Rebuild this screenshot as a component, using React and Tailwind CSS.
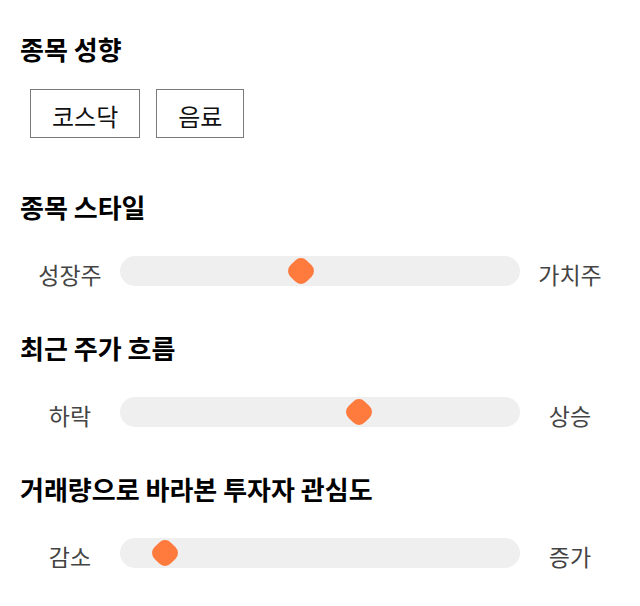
import { useState } from "react";

const sliders = [
  { id: "style", title: "종목 스타일", left: "성장주", right: "가치주", value: 45 },
  { id: "trend", title: "최근 주가 흐름", left: "하락", right: "상승", value: 60.5 },
  { id: "volume", title: "거래량으로 바라본 투자자 관심도", left: "감소", right: "증가", value: 8.3 },
];

function Slider({ value }) {
  return (
    <div className="relative h-[30px] flex-1 rounded-full bg-[#efefef]">
      <div
        className="absolute top-1/2 -translate-x-1/2 -translate-y-1/2"
        style={{ left: `calc(14px + (100% - 28px) * ${value / 100})` }}
      >
        <div className="h-[23px] w-[23px] rotate-45 rounded-[8px] bg-[#ff7a3d]" />
      </div>
    </div>
  );
}

export default function App() {
  const [tags] = useState(["코스닥", "음료"]);

  return (
    <div className="min-h-[606px] bg-white px-5 pt-[34px] font-['Noto_Sans_CJK_KR','Noto_Sans',sans-serif] text-black">
      <h2 className="text-[26px] font-bold leading-[30px]">종목 성향</h2>
      <div className="mt-[25px] flex gap-4 pl-[10px]">
        {tags.map((t) => (
          <span
            key={t}
            className="border border-[#7a7a7a] px-[21px] pb-[6px] pt-[10px] text-[24px] leading-[31px] text-[#111]"
          >
            {t}
          </span>
        ))}
      </div>

      {sliders.map((s, i) => (
        <div key={s.id} className={i === 0 ? "mt-[54px]" : "mt-[47px]"}>
          <h2 className="text-[26px] font-bold leading-[30px]">{s.title}</h2>
          <div className="mt-[34px] flex items-center">
            <span className="w-[100px] pt-[6px] text-center text-[23px] leading-[24px] text-[#444]">{s.left}</span>
            <Slider value={s.value} />
            <span className="w-[100px] pt-[6px] text-center text-[23px] leading-[24px] text-[#444]">{s.right}</span>
          </div>
        </div>
      ))}
    </div>
  );
}
